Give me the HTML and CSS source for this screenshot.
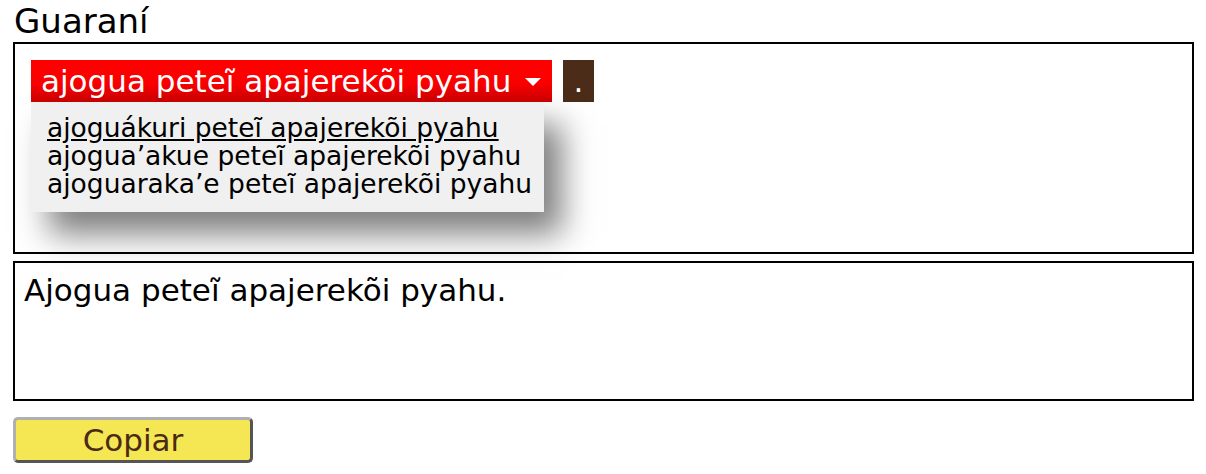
FILE: index.html
```html
<!DOCTYPE html>
<html lang="gn">
<head>
<meta charset="utf-8">
<title>Guaraní</title>
<link rel="stylesheet" href="styles.css">
</head>
<body>
<div class="page">
  <div class="title">Guaraní</div>
  <div class="editor">
    <div class="row">
      <div class="picker">
        <div class="select">ajogua peteĩ apajerekõi pyahu <span class="caret"></span></div>
        <div class="menu">
          <div class="item active">ajoguákuri peteĩ apajerekõi pyahu</div>
          <div class="item">ajogua’akue peteĩ apajerekõi pyahu</div>
          <div class="item">ajoguaraka’e peteĩ apajerekõi pyahu</div>
        </div>
      </div>
      <div class="dot">.</div>
    </div>
  </div>
  <div class="output">Ajogua peteĩ apajerekõi pyahu.</div>
  <button class="copy">Copiar</button>
</div>
</body>
</html>
```
FILE: styles.css
```css
html, body {
  margin: 0;
  padding: 0;
  background: #fff;
}
body {
  font-family: "DejaVu Sans", Verdana, sans-serif;
  color: #000;
}
.page {
  padding: 0 12px 0 13px;
}
.title {
  font-size: 34px;
  line-height: 42px;
  height: 42px;
  padding-left: 1px;
}
.editor {
  border: 2px solid #000;
  padding: 16px;
  box-sizing: border-box;
  height: 212px;
}
.row {
  display: flex;
  gap: 11px;
  align-items: flex-start;
}
.picker {
  position: relative;
}
.select {
  background: linear-gradient(to bottom, #ff0000 0%, #fb0000 55%, #cc0000 100%);
  color: #fff;
  font-size: 31px;
  height: 42px;
  line-height: 42px;
  padding: 0 11px 0 10px;
  white-space: nowrap;
  display: flex;
  align-items: center;
  gap: 4px;
  width: 521px;
  box-sizing: border-box;
}
.caret {
  display: inline-block;
  width: 0;
  height: 0;
  border-left: 8px solid transparent;
  border-right: 8px solid transparent;
  border-top: 8px solid #fff;
  margin-top: 2px;
  margin-left: auto;
}
.menu {
  position: absolute;
  left: 0;
  top: 42px;
  width: 513px;
  height: 110px;
  background: #f0f0f0;
  padding: 12px 0 0 16px;
  box-sizing: border-box;
  box-shadow: 18px 22px 30px rgba(0,0,0,0.5);
  font-size: 26.5px;
  line-height: 28px;
  white-space: nowrap;
}
.item.active {
  text-decoration: underline;
}
.dot {
  background: #4a2c18;
  color: #fff;
  font-size: 31px;
  width: 31px;
  height: 42px;
  line-height: 42px;
  text-align: center;
}
.output {
  margin-top: 7px;
  border: 2px solid #000;
  height: 140px;
  box-sizing: border-box;
  padding: 12px 9px;
  font-size: 31px;
  line-height: 30px;
}
.copy {
  display: block;
  margin-top: 16px;
  width: 240px;
  height: 46px;
  background: #f5e653;
  border: 3px solid;
  border-color: #b0b0b0 #555 #555 #b0b0b0;
  border-radius: 5px;
  font-family: "DejaVu Sans", Verdana, sans-serif;
  font-size: 31px;
  color: #4a2a15;
  padding: 0;
  line-height: 38px;
}
```
